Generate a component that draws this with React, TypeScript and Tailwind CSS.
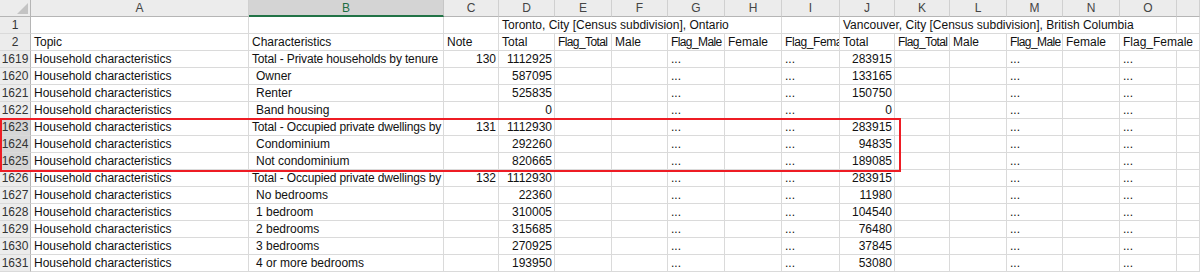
import React from 'react';

// column widths: row header, A..O, partial P
const widths = [
  'w-[31px]',
  'w-[218px]',
  'w-[195px]',
  'w-[55px]',
  'w-[56px]',
  'w-[57px]',
  'w-[56px]',
  'w-[57px]',
  'w-[57px]',
  'w-[58px]',
  'w-[55px]',
  'w-[55px]',
  'w-[57px]',
  'w-[56px]',
  'w-[57px]',
  'w-[57px]',
  'w-[23px]',
];

const letters = ['A', 'B', 'C', 'D', 'E', 'F', 'G', 'H', 'I', 'J', 'K', 'L', 'M', 'N', 'O', ''];

type Row = {
  n: number;
  label: string;
  indent?: boolean;
  note?: string;
  tor: string;
  van: string;
};

// labels cut where the next column (Note) starts
const rows: Row[] = [
  { n: 1619, label: 'Total - Private households by tenure', note: '130', tor: '1112925', van: '283915' },
  { n: 1620, label: 'Owner', indent: true, tor: '587095', van: '133165' },
  { n: 1621, label: 'Renter', indent: true, tor: '525835', van: '150750' },
  { n: 1622, label: 'Band housing', indent: true, tor: '0', van: '0' },
  { n: 1623, label: 'Total - Occupied private dwellings by', note: '131', tor: '1112930', van: '283915' },
  { n: 1624, label: 'Condominium', indent: true, tor: '292260', van: '94835' },
  { n: 1625, label: 'Not condominium', indent: true, tor: '820665', van: '189085' },
  { n: 1626, label: 'Total - Occupied private dwellings by', note: '132', tor: '1112930', van: '283915' },
  { n: 1627, label: 'No bedrooms', indent: true, tor: '22360', van: '11980' },
  { n: 1628, label: '1 bedroom', indent: true, tor: '310005', van: '104540' },
  { n: 1629, label: '2 bedrooms', indent: true, tor: '315685', van: '76480' },
  { n: 1630, label: '3 bedrooms', indent: true, tor: '270925', van: '37845' },
  { n: 1631, label: '4 or more bedrooms', indent: true, tor: '193950', van: '53080' },
];

const selected = [1623, 1624, 1625];

const Cell: React.FC<{
  w: string;
  children?: React.ReactNode;
  right?: boolean;
  noBorder?: boolean;
  spill?: boolean;
  className?: string;
}> = ({ w, children, right, noBorder, spill, className }) => (
  <div
    className={`${w} shrink-0 h-[17px] border-b border-[#dadada] ${noBorder ? '' : 'border-r'} ${
      spill ? 'overflow-visible relative z-10' : 'overflow-hidden'
    } whitespace-nowrap leading-[16px] ${right ? 'text-right pr-[2px]' : 'pl-[3px]'} ${className ?? ''}`}
  >
    {children}
  </div>
);

const RowHead: React.FC<{ n: number | string; sel?: boolean }> = ({ n, sel }) => (
  <div
    className={`w-[31px] shrink-0 h-[17px] border-b border-r border-b-[#dadada] border-r-[#b5b5b5] ${
      sel ? 'bg-[#d6d6d6]' : 'bg-[#ececec]'
    } text-center leading-[16px] text-[#333]`}
  >
    {n}
  </div>
);

export default function App() {
  return (
    <div
      className="relative w-[1200px] h-[273px] overflow-hidden bg-white text-[12px] text-[#111]"
      style={{ fontFamily: '"Liberation Sans", Arial, sans-serif' }}
    >
      {/* column header row */}
      <div className="flex h-[17px]">
        <div className="w-[31px] shrink-0 h-[17px] bg-[#ececec] border-r border-b border-[#b5b5b5] relative">
          <div className="absolute right-[2px] bottom-[2px] w-0 h-0 border-l-[11px] border-l-transparent border-b-[11px] border-b-[#c3c3c3]" />
        </div>
        {letters.map((l, i) => (
          <div
            key={i}
            className={`${widths[i + 1]} shrink-0 h-[17px] text-center leading-[16px] ${
              l === 'B'
                ? 'bg-[#d4d4d4] text-[#1e6e42] border-b-2 border-b-[#217346] border-r border-r-[#c6c6c6]'
                : 'bg-[#ececec] text-[#444] border-b border-b-[#b5b5b5] border-r border-r-[#d0d0d0]'
            }`}
          >
            {l}
          </div>
        ))}
      </div>

      {/* row 1: geography titles */}
      <div className="flex">
        <RowHead n={1} />
        <Cell w={widths[1]} />
        <Cell w={widths[2]} />
        <Cell w={widths[3]} />
        <Cell w="w-[283px]">Toronto, City [Census subdivision], Ontario</Cell>
        <Cell w={widths[9]} />
        <Cell w="w-[337px]">Vancouver, City [Census subdivision], British Columbia</Cell>
        <Cell w={widths[16]} />
      </div>

      {/* row 2: column titles */}
      <div className="flex">
        <RowHead n={2} />
        <Cell w={widths[1]}>Topic</Cell>
        <Cell w={widths[2]}>Characteristics</Cell>
        <Cell w={widths[3]}>Note</Cell>
        <Cell w={widths[4]}>Total</Cell>
        <Cell w={widths[5]} className="tracking-[-0.6px]">Flag_Total</Cell>
        <Cell w={widths[6]}>Male</Cell>
        <Cell w={widths[7]} className="tracking-[-0.6px]">Flag_Male</Cell>
        <Cell w={widths[8]}>Female</Cell>
        <Cell w={widths[9]} className="tracking-[-0.4px]">Flag_Fema</Cell>
        <Cell w={widths[10]}>Total</Cell>
        <Cell w={widths[11]} className="tracking-[-0.6px]">Flag_Total</Cell>
        <Cell w={widths[12]}>Male</Cell>
        <Cell w={widths[13]} className="tracking-[-0.6px]">Flag_Male</Cell>
        <Cell w={widths[14]}>Female</Cell>
        <Cell w={widths[15]} spill noBorder>
          Flag_Female
        </Cell>
        <Cell w={widths[16]} />
      </div>

      {rows.map((r) => (
        <div key={r.n} className="flex">
          <RowHead n={r.n} sel={selected.includes(r.n)} />
          <Cell w={widths[1]}>Household characteristics</Cell>
          <Cell w={widths[2]} className={r.indent ? 'pl-[7px]' : 'tracking-[-0.15px]'}>
            {r.label}
          </Cell>
          <Cell w={widths[3]} right>
            {r.note}
          </Cell>
          <Cell w={widths[4]} right>
            {r.tor}
          </Cell>
          <Cell w={widths[5]} />
          <Cell w={widths[6]} />
          <Cell w={widths[7]}>...</Cell>
          <Cell w={widths[8]} />
          <Cell w={widths[9]}>...</Cell>
          <Cell w={widths[10]} right>
            {r.van}
          </Cell>
          <Cell w={widths[11]} />
          <Cell w={widths[12]} />
          <Cell w={widths[13]}>...</Cell>
          <Cell w={widths[14]} />
          <Cell w={widths[15]}>...</Cell>
          <Cell w={widths[16]} />
        </div>
      ))}

      {/* annotation box over rows 1623-1625 */}
      <div className="absolute left-0 top-[118px] w-[901px] h-[54px] border-2 border-[#ee1c24] pointer-events-none" />
    </div>
  );
}
